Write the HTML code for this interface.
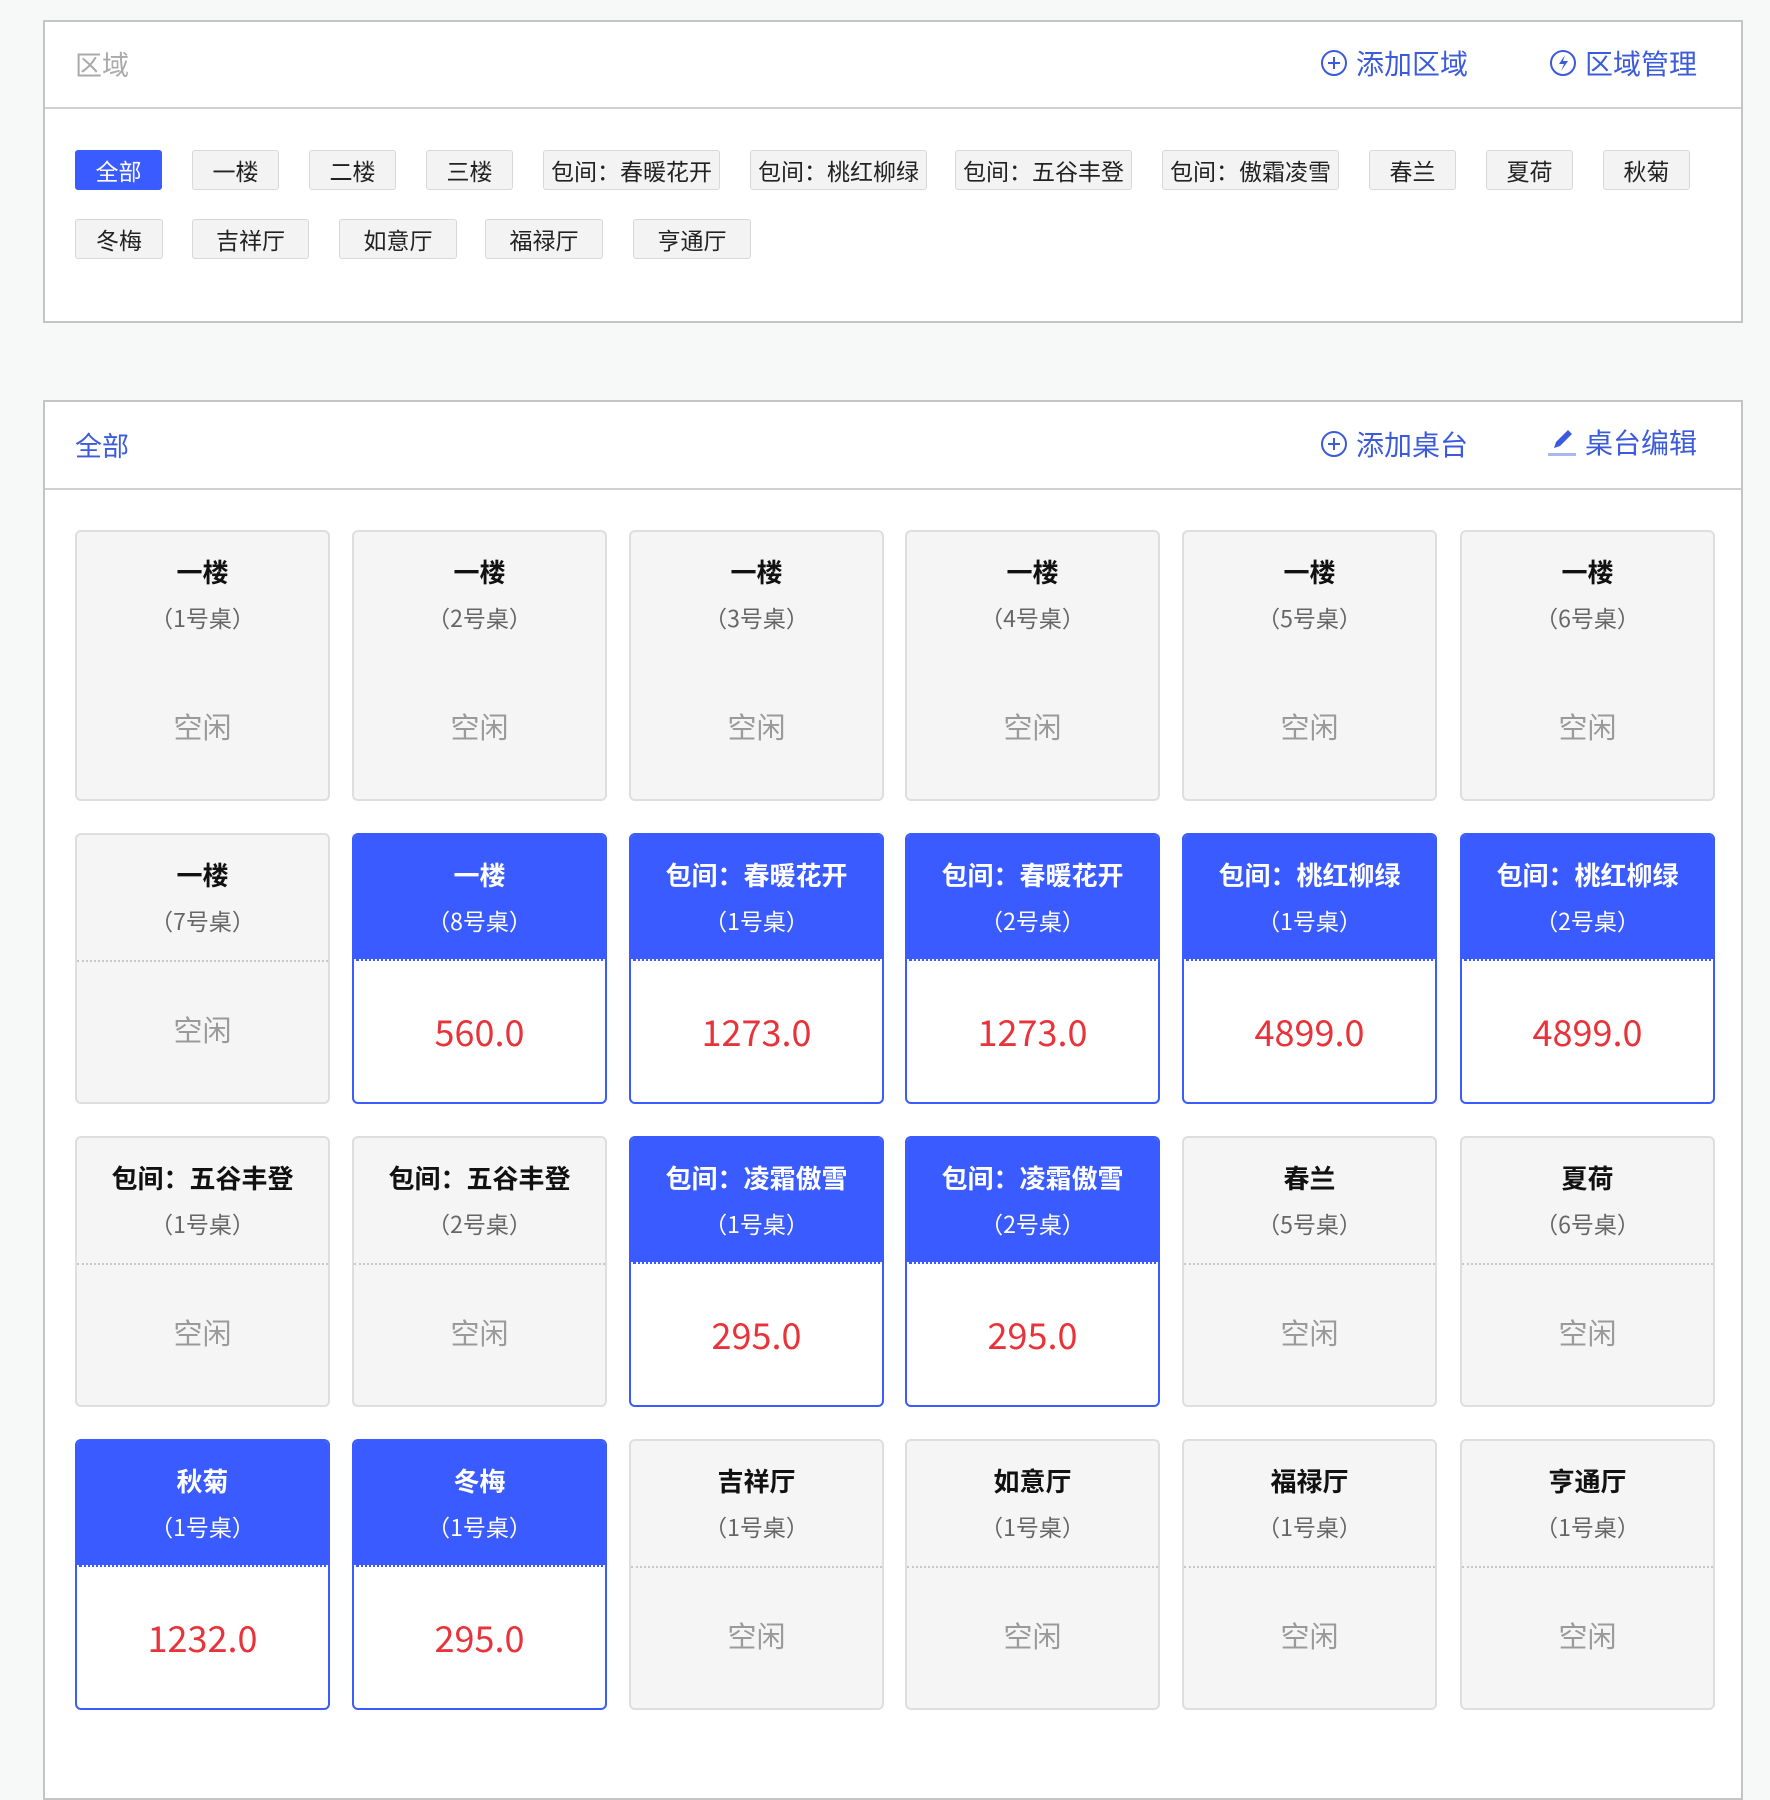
<!DOCTYPE html>
<html><head><meta charset="utf-8"><style>
*{margin:0;padding:0;box-sizing:border-box}
body{width:1770px;height:1762px;background:#f7f8f8;font-family:"Noto Sans CJK SC","Liberation Sans",sans-serif;position:relative;overflow:hidden}
.panel{position:absolute;left:43px;width:1700px;background:#fff;border:2px solid #c4c4c4}
.hd{position:absolute;left:0;right:0;top:0;border-bottom:2px solid #d0d0d0}
.title{position:absolute;left:30px;font-size:27px}
.act{position:absolute;font-size:28px;color:#3b5bdb;display:flex;align-items:center;gap:8px;white-space:nowrap}
.tag{position:absolute;height:40px;background:#f3f3f3;border:1px solid #d8d8d8;border-radius:3px;font-size:23px;color:#222;display:flex;align-items:center;justify-content:center;white-space:nowrap}
.tag.on{background:#3a5bff;border-color:#3a5bff;color:#fff}
.card{position:absolute;width:255px;height:271px;border:2px solid #dedede;border-radius:6px;background:#f5f5f5;overflow:hidden;text-align:center}
.card .t{position:absolute;left:0;right:0;top:22px;font-size:26px;font-weight:bold;color:#111;line-height:36px}
.card .s{position:absolute;left:0;right:0;top:68px;font-size:23px;color:#666;line-height:34px}
.card .d{position:absolute;left:0;right:0;top:125px;border-top:2px dotted #c8c8c8}
.card .st{position:absolute;left:0;right:0;top:174px;font-size:29px;color:#9a9a9a;line-height:40px}
.card.b{border-color:#3a5bff;background:#fff}
.card.b .top{position:absolute;left:0;right:0;top:0;height:126px;background:#3a5bff;border-bottom:2px dotted #fff}
.card.b .t,.card.b .s{color:#fff}
.card.b .p{position:absolute;left:0;right:0;top:174px;font-size:36px;color:#e8333a;line-height:44px}
</style></head><body>

<div class="panel" style="top:20px;height:303px">
 <div class="hd" style="height:87px">
  <div class="title" style="top:22px;color:#aaa">区域</div>
  <div class="act" style="left:1275px;top:21px"><svg width="28" height="28" viewBox="0 0 28 28"><circle cx="14" cy="14" r="12" fill="none" stroke="#3b5bdb" stroke-width="2"/><path d="M14 8v12M8 14h12" stroke="#3b5bdb" stroke-width="2"/></svg>添加区域</div>
  <div class="act" style="left:1504px;top:21px"><svg width="28" height="28" viewBox="0 0 28 28"><circle cx="14" cy="14" r="12" fill="none" stroke="#3b5bdb" stroke-width="2"/><path d="M16 6l-6 9h5l-3 7 7-10h-5z" fill="#3b5bdb"/></svg>区域管理</div>
 </div>
</div>
<div class="tag on" style="left:75px;top:150px;width:87px">全部</div>
<div class="tag" style="left:192px;top:150px;width:87px">一楼</div>
<div class="tag" style="left:309px;top:150px;width:87px">二楼</div>
<div class="tag" style="left:426px;top:150px;width:87px">三楼</div>
<div class="tag" style="left:543px;top:150px;width:177px">包间：春暖花开</div>
<div class="tag" style="left:750px;top:150px;width:177px">包间：桃红柳绿</div>
<div class="tag" style="left:955px;top:150px;width:177px">包间：五谷丰登</div>
<div class="tag" style="left:1162px;top:150px;width:177px">包间：傲霜凌雪</div>
<div class="tag" style="left:1369px;top:150px;width:87px">春兰</div>
<div class="tag" style="left:1486px;top:150px;width:87px">夏荷</div>
<div class="tag" style="left:1603px;top:150px;width:87px">秋菊</div>
<div class="tag" style="left:75px;top:219px;width:88px">冬梅</div>
<div class="tag" style="left:192px;top:219px;width:117px">吉祥厅</div>
<div class="tag" style="left:339px;top:219px;width:118px">如意厅</div>
<div class="tag" style="left:485px;top:219px;width:118px">福禄厅</div>
<div class="tag" style="left:633px;top:219px;width:118px">亨通厅</div>

<div class="panel" style="top:400px;height:1400px">
 <div class="hd" style="height:88px">
  <div class="title" style="top:23px;color:#3b5bdb">全部</div>
  <div class="act" style="left:1275px;top:22px"><svg width="28" height="28" viewBox="0 0 28 28"><circle cx="14" cy="14" r="12" fill="none" stroke="#3b5bdb" stroke-width="2"/><path d="M14 8v12M8 14h12" stroke="#3b5bdb" stroke-width="2"/></svg>添加桌台</div>
  <div class="act" style="left:1502px;top:20px"><svg width="30" height="32" viewBox="0 0 30 32"><path d="M7 22l2-6 12-12 4 4-12 12z" fill="#3b5bdb"/><rect x="1" y="27" width="28" height="3" fill="#aab8f0"/></svg>桌台编辑</div>
 </div>
</div>

<div class="card" style="left:75px;top:530px"><div class="t">一楼</div><div class="s">（1号桌）</div><div class="st">空闲</div></div>
<div class="card" style="left:352px;top:530px"><div class="t">一楼</div><div class="s">（2号桌）</div><div class="st">空闲</div></div>
<div class="card" style="left:629px;top:530px"><div class="t">一楼</div><div class="s">（3号桌）</div><div class="st">空闲</div></div>
<div class="card" style="left:905px;top:530px"><div class="t">一楼</div><div class="s">（4号桌）</div><div class="st">空闲</div></div>
<div class="card" style="left:1182px;top:530px"><div class="t">一楼</div><div class="s">（5号桌）</div><div class="st">空闲</div></div>
<div class="card" style="left:1460px;top:530px"><div class="t">一楼</div><div class="s">（6号桌）</div><div class="st">空闲</div></div>

<div class="card" style="left:75px;top:833px"><div class="t">一楼</div><div class="s">（7号桌）</div><div class="d"></div><div class="st">空闲</div></div>
<div class="card b" style="left:352px;top:833px"><div class="top"></div><div class="t">一楼</div><div class="s">（8号桌）</div><div class="p">560.0</div></div>
<div class="card b" style="left:629px;top:833px"><div class="top"></div><div class="t">包间：春暖花开</div><div class="s">（1号桌）</div><div class="p">1273.0</div></div>
<div class="card b" style="left:905px;top:833px"><div class="top"></div><div class="t">包间：春暖花开</div><div class="s">（2号桌）</div><div class="p">1273.0</div></div>
<div class="card b" style="left:1182px;top:833px"><div class="top"></div><div class="t">包间：桃红柳绿</div><div class="s">（1号桌）</div><div class="p">4899.0</div></div>
<div class="card b" style="left:1460px;top:833px"><div class="top"></div><div class="t">包间：桃红柳绿</div><div class="s">（2号桌）</div><div class="p">4899.0</div></div>

<div class="card" style="left:75px;top:1136px"><div class="t">包间：五谷丰登</div><div class="s">（1号桌）</div><div class="d"></div><div class="st">空闲</div></div>
<div class="card" style="left:352px;top:1136px"><div class="t">包间：五谷丰登</div><div class="s">（2号桌）</div><div class="d"></div><div class="st">空闲</div></div>
<div class="card b" style="left:629px;top:1136px"><div class="top"></div><div class="t">包间：凌霜傲雪</div><div class="s">（1号桌）</div><div class="p">295.0</div></div>
<div class="card b" style="left:905px;top:1136px"><div class="top"></div><div class="t">包间：凌霜傲雪</div><div class="s">（2号桌）</div><div class="p">295.0</div></div>
<div class="card" style="left:1182px;top:1136px"><div class="t">春兰</div><div class="s">（5号桌）</div><div class="d"></div><div class="st">空闲</div></div>
<div class="card" style="left:1460px;top:1136px"><div class="t">夏荷</div><div class="s">（6号桌）</div><div class="d"></div><div class="st">空闲</div></div>

<div class="card b" style="left:75px;top:1439px"><div class="top"></div><div class="t">秋菊</div><div class="s">（1号桌）</div><div class="p">1232.0</div></div>
<div class="card b" style="left:352px;top:1439px"><div class="top"></div><div class="t">冬梅</div><div class="s">（1号桌）</div><div class="p">295.0</div></div>
<div class="card" style="left:629px;top:1439px"><div class="t">吉祥厅</div><div class="s">（1号桌）</div><div class="d"></div><div class="st">空闲</div></div>
<div class="card" style="left:905px;top:1439px"><div class="t">如意厅</div><div class="s">（1号桌）</div><div class="d"></div><div class="st">空闲</div></div>
<div class="card" style="left:1182px;top:1439px"><div class="t">福禄厅</div><div class="s">（1号桌）</div><div class="d"></div><div class="st">空闲</div></div>
<div class="card" style="left:1460px;top:1439px"><div class="t">亨通厅</div><div class="s">（1号桌）</div><div class="d"></div><div class="st">空闲</div></div>

</body></html>
